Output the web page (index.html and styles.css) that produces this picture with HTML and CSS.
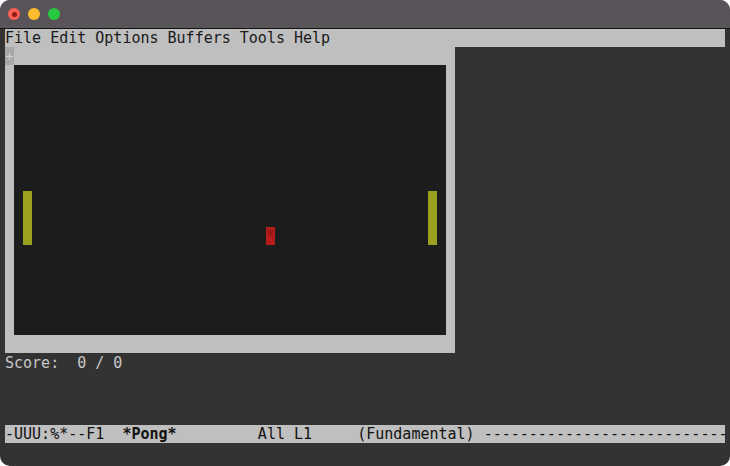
FILE: index.html
```html
<!DOCTYPE html>
<html>
<head>
<meta charset="utf-8">
<link rel="stylesheet" href="styles.css">
</head>
<body>
<div class="window">
  <div class="titlebar">
    <span class="light red"><span class="dot"></span></span>
    <span class="light yellow"></span>
    <span class="light green"></span>
  </div>
  <div class="content">
    <div class="menubar">File Edit Options Buffers Tools Help</div>
    <div class="game-row">
      <div class="game-frame">
        <span class="fringe"><span class="plus-h"></span><span class="plus-v"></span></span>
        <div class="board">
          <div class="paddle left"></div>
          <div class="paddle right"></div>
          <div class="ball">*</div>
        </div>
      </div>
    </div>
    <div class="line score">Score:  0 / 0</div>
    <div class="spacer"></div>
    <div class="line modeline">-UUU:%*--F1  <b>*Pong*</b>         All L1     (Fundamental) ---------------------------</div>
    <div class="line echo"></div>
  </div>
</div>
</body>
</html>
```
FILE: styles.css
```css
html, body {
  margin: 0;
  padding: 0;
  background: #ffffff;
}
.window {
  width: 730px;
  height: 466px;
  background: #333333;
  border-radius: 10px;
  overflow: hidden;
  font-family: "DejaVu Sans Mono", monospace;
  font-size: 15px;
  line-height: 18px;
}
.titlebar {
  height: 28px;
  background: #58545a;
  border-bottom: 1px solid #141414;
  display: flex;
  align-items: center;
  gap: 8px;
  padding-left: 8px;
}
.light {
  width: 12px;
  height: 12px;
  border-radius: 50%;
  display: flex;
  align-items: center;
  justify-content: center;
}
.red { background: #fe5f57; }
.red .dot { width: 5px; height: 5px; border-radius: 50%; background: #8c1a12; }
.yellow { background: #febc2e; }
.green { background: #28c840; }
.content {
  padding: 0 5px;
}
.menubar {
  height: 18px;
  background: #bfbfbf;
  color: #1a1a1a;
  white-space: pre;
}
.game-row {
  display: flex;
}
.game-frame {
  position: relative;
  width: 432px;
  height: 270px;
  padding: 18px 9px;
  background: #bfbfbf;
}
.fringe {
  position: absolute;
  left: 0;
  top: 0;
  width: 9px;
  height: 18px;
  background: #a9a9a9;
}
.plus-h {
  position: absolute;
  left: 1px;
  top: 9px;
  width: 7px;
  height: 1px;
  background: #d6d6d6;
}
.plus-v {
  position: absolute;
  left: 4px;
  top: 6px;
  width: 1px;
  height: 7px;
  background: #d6d6d6;
}
.board {
  position: relative;
  width: 432px;
  height: 270px;
  background: #1c1c1c;
}
.paddle {
  position: absolute;
  top: 126px;
  width: 9px;
  height: 54px;
  background: #9ba01f;
}
.paddle.left { left: 9px; }
.paddle.right { left: 414px; }
.ball {
  position: absolute;
  left: 252px;
  top: 162px;
  width: 9px;
  height: 18px;
  background: #b41b1b;
  color: #8e1414;
  font-size: 15px;
  line-height: 18px;
  text-align: center;
  overflow: hidden;
}
.line {
  height: 18px;
  white-space: pre;
}
.score {
  color: #c8c8c8;
  padding-top: 1px;
  height: 17px;
}
.spacer {
  height: 54px;
}
.modeline {
  background: #bfbfbf;
  color: #111111;
}
.modeline b {
  font-weight: bold;
}
```
